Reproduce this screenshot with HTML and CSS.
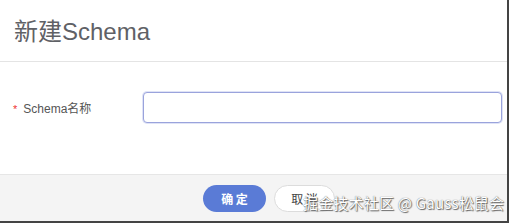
FILE: index.html
```html
<!DOCTYPE html>
<html lang="zh">
<head>
<meta charset="utf-8">
<title>新建Schema</title>
<link rel="stylesheet" href="styles.css">
</head>
<body>
<div class="dialog">
    <div class="dialog-header">
        <h2 class="dialog-title">新建Schema</h2>
    </div>
    <div class="dialog-body">
        <div class="form-row">
            <label class="form-label"><span class="required">*</span>Schema名称</label>
            <input class="form-input" type="text">
        </div>
    </div>
    <div class="dialog-footer">
        <button class="btn btn-primary">确 定</button>
        <button class="btn btn-default">取 消</button>
        <span class="watermark">掘金技术社区 @ Gauss松鼠会</span>
    </div>
</div>
</body>
</html>
```

FILE: styles.css
```css
html, body { margin: 0; padding: 0; background: #444; }
body { font-family: "Liberation Sans", Arial, "Noto Sans CJK SC", sans-serif; color: #606266; width: 509px; height: 223px; overflow: hidden; }

.dialog { width: 507px; height: 221px; background: #fff; display: flex; flex-direction: column; position: relative; }

.dialog-header { height: 62px; border-bottom: 1px solid #e4e4e4; box-sizing: border-box; display: flex; align-items: center; padding-left: 14px; flex-shrink: 0; }
.dialog-title { margin: 0; font-size: 24px; font-weight: normal; color: #5f6166; padding-bottom: 2px; }

.dialog-body { height: 112px; box-sizing: border-box; padding-top: 29px; flex-shrink: 0; }
.form-row { display: flex; align-items: center; height: 32px; }
.form-label { flex: 0 0 142px; padding-left: 13px; box-sizing: border-box; font-size: 12px; color: #555; }
.required { color: #e33; margin-right: 6px; font-size: 11px; }
.form-input { flex: 0 0 359px; height: 31px; box-sizing: border-box; border: 1px solid #9aa3dc; border-radius: 4px; outline: none; box-shadow: 0 0 0 1px #dfe3f6; background: #fff; margin-left: 1px; }

.dialog-footer { flex: 1; background: #f4f4f4; border-top: 1px solid #e6e6e6; display: flex; align-items: center; padding-left: 203px; gap: 8px; position: relative; }

.btn { height: 27px; border-radius: 14px; font-size: 12px; font-family: "Noto Sans CJK SC", sans-serif; cursor: pointer; padding: 0; margin-top: 1px; }
.btn-primary { width: 63px; background: #5a7bd6; color: #fff; border: none; font-weight: bold; }
.btn-default { width: 61px; background: #fff; color: #444; border: 1px solid #dcdcdc; }

.watermark { position: absolute; left: 303px; top: 17px; font-size: 15px; font-family: "Noto Sans CJK SC", sans-serif; color: #fff; text-shadow: 0 0 1px #555, 1px 1px 1px #666; white-space: nowrap; letter-spacing: 0.2px; }
```
